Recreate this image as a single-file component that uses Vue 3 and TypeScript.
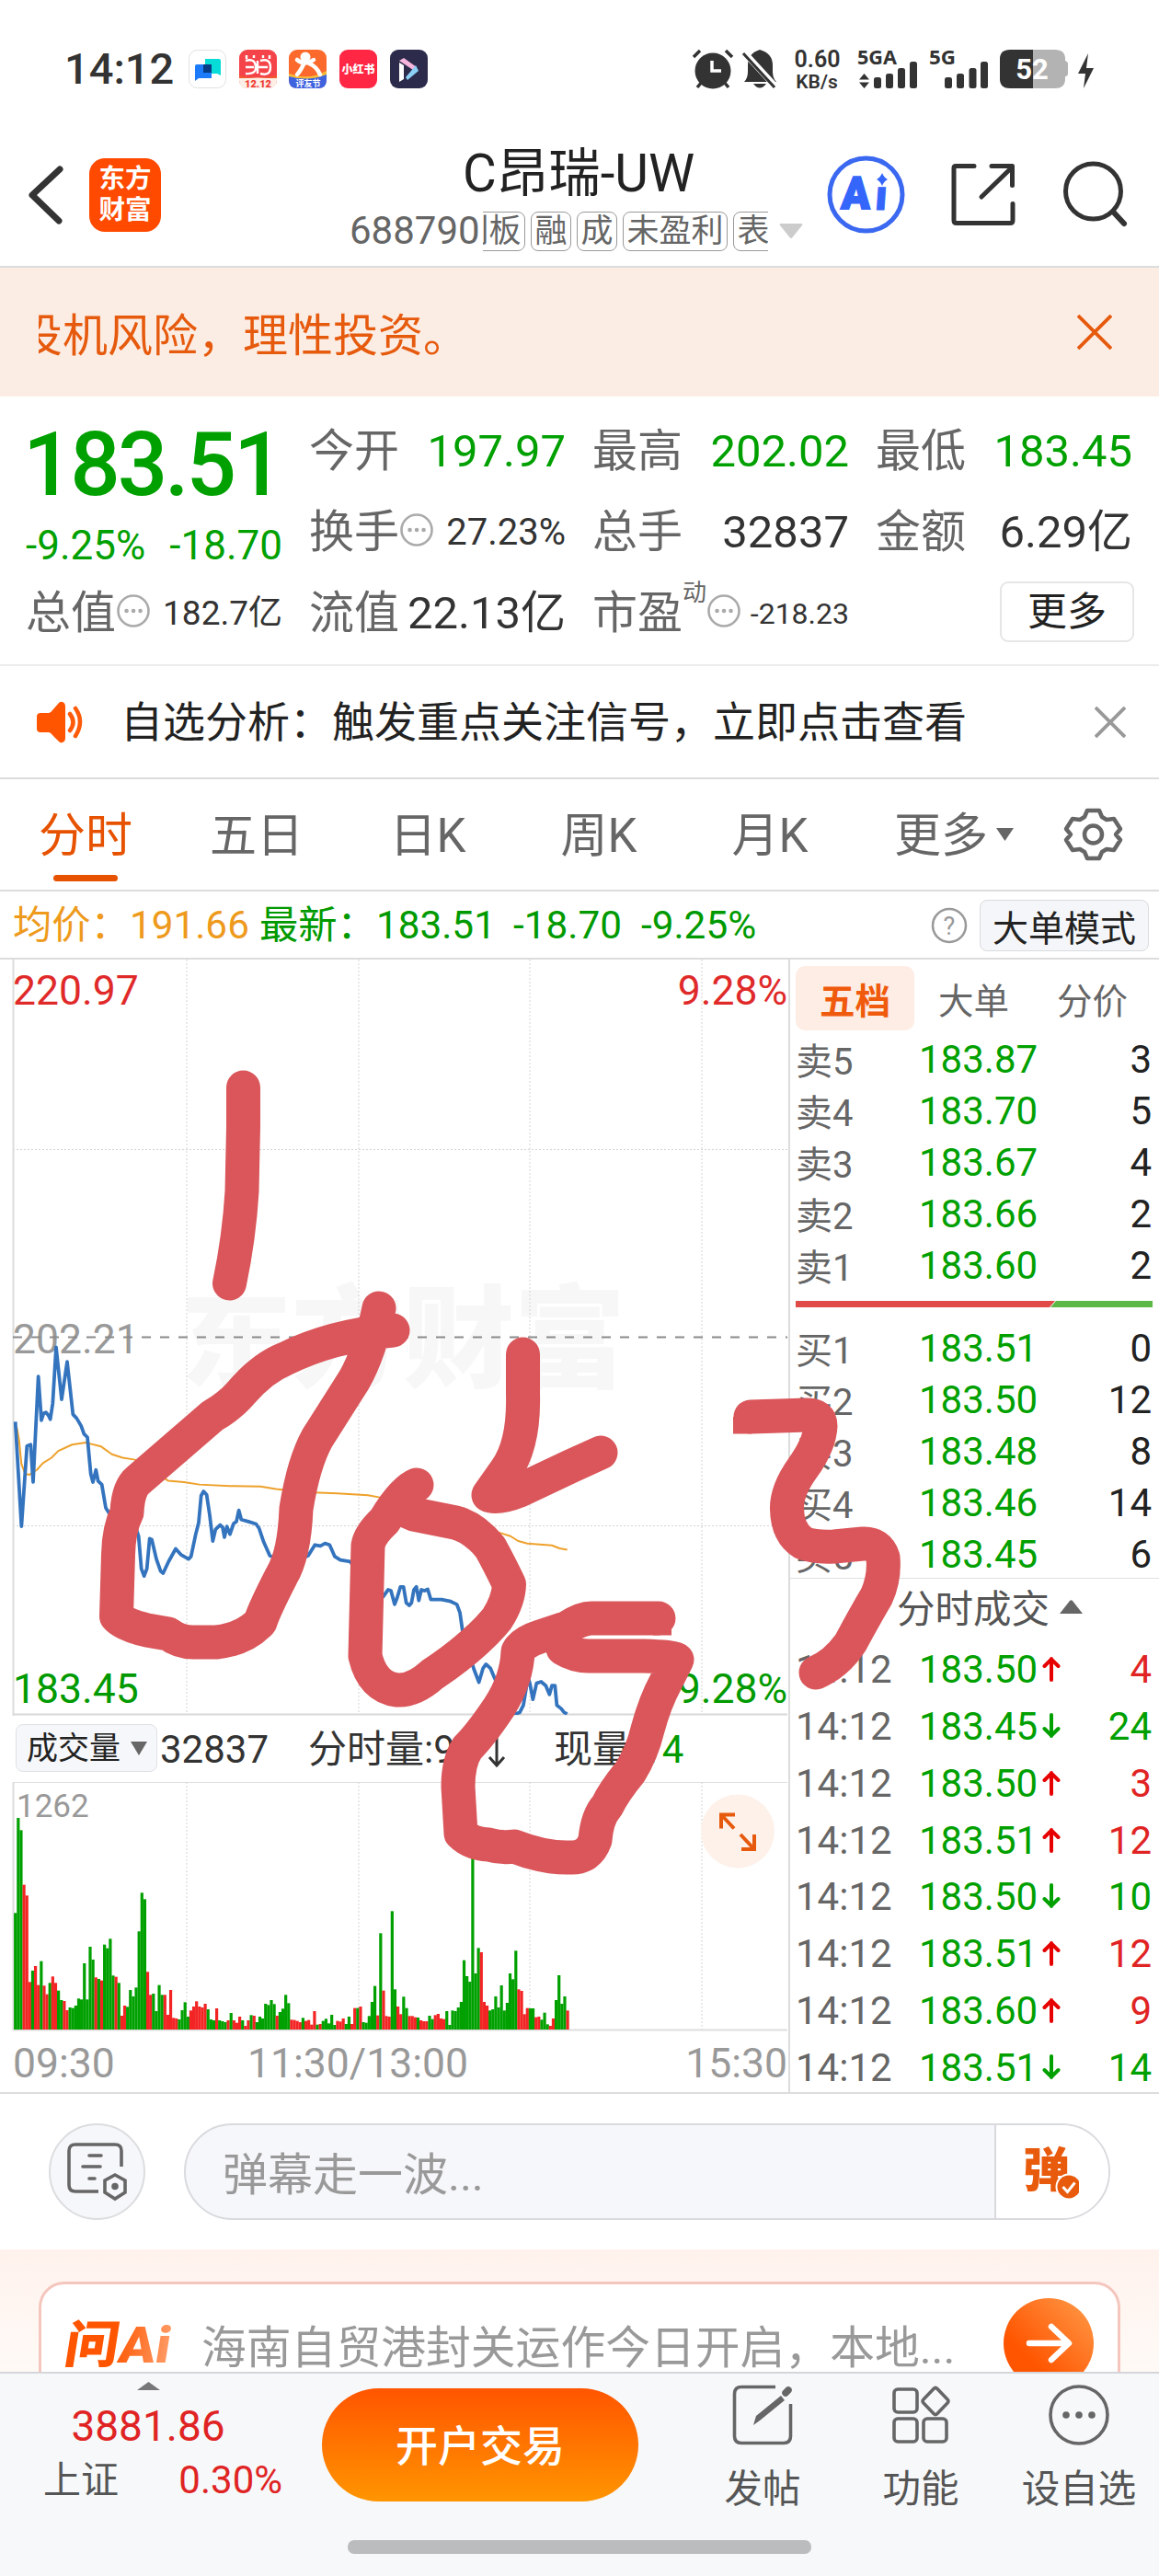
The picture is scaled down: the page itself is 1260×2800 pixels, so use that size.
<script setup lang="ts">
interface Level { label: string; price: string; qty: string }
interface Trade { price: string; up: boolean; qty: string }

const tags: string[] = ['科创板', '融', '成', '未盈利', '表决权']
const tabs: string[] = ['分时', '五日', '日K', '周K', '月K', '更多']

const sells: Level[] = [
  { label: '卖5', price: '183.87', qty: '3' },
  { label: '卖4', price: '183.70', qty: '5' },
  { label: '卖3', price: '183.67', qty: '4' },
  { label: '卖2', price: '183.66', qty: '2' },
  { label: '卖1', price: '183.60', qty: '2' },
]
const buys: Level[] = [
  { label: '买1', price: '183.51', qty: '0' },
  { label: '买2', price: '183.50', qty: '12' },
  { label: '买3', price: '183.48', qty: '8' },
  { label: '买4', price: '183.46', qty: '14' },
  { label: '买5', price: '183.45', qty: '6' },
]
const trades: Trade[] = [
  { price: '183.50', up: true, qty: '4' },
  { price: '183.45', up: false, qty: '24' },
  { price: '183.50', up: true, qty: '3' },
  { price: '183.51', up: true, qty: '12' },
  { price: '183.50', up: false, qty: '10' },
  { price: '183.51', up: true, qty: '12' },
  { price: '183.60', up: true, qty: '9' },
  { price: '183.51', up: false, qty: '14' },
]

const gridX: number[] = [203, 390, 576, 763]

const priceLine =
  '50,953 70,1168 88,1003 100,1000 108,1077 125,860 135,950 142,936 150,934 158,940 164,948 172,915 183,800 201,907 219,830 238,938 250,946 265,962 274,978 285,985 296,1060 303,1077 313,1052 320,1075 332,1082 345,1130 355,1140 400,1150 440,1165 452,1188 461,1255 470,1270 479,1255 488,1193 495,1195 510,1235 524,1260 532,1264 550,1240 573,1214 590,1226 615,1235 623,1230 638,1185 648,1160 656,1105 664,1096 674,1103 684,1145 694,1198 703,1174 718,1165 726,1170 732,1190 740,1168 750,1184 762,1162 771,1158 779,1135 787,1154 810,1158 835,1163 845,1172 860,1200 880,1228 930,1240 990,1233 1005,1228 1027,1206 1045,1208 1060,1203 1075,1206 1092,1230 1110,1237 1142,1240 1200,1290 1250,1312 1266,1298 1275,1300 1287,1328 1295,1315 1306,1292 1316,1292 1325,1325 1335,1330 1342,1325 1350,1298 1358,1292 1366,1320 1374,1298 1385,1300 1395,1297 1405,1318 1440,1318 1470,1322 1490,1328 1500,1345 1508,1380 1545,1460 1562,1488 1575,1460 1585,1451 1600,1460 1612,1478 1650,1530 1680,1553 1695,1550 1707,1535 1722,1478 1728,1490 1738,1523 1750,1490 1765,1487 1780,1495 1792,1513 1800,1495 1810,1495 1816,1535 1830,1542 1840,1550 1850,1553'
const averageLine =
  '55,965 62,990 70,1040 82,1060 95,1062 120,1052 140,1038 168,1027 190,1013 235,1000 280,996 330,1004 365,1020 400,1027 440,1031 500,1055 548,1074 600,1077 650,1082 750,1085 850,1086 900,1091 1000,1098 1100,1100 1200,1104 1235,1108 1250,1112 1400,1140 1640,1183 1665,1188 1690,1198 1720,1203 1800,1207 1825,1213 1850,1216'

// One entry per minute: bar height, r = rising, g = falling.
const volumeData =
  '380g 690g 650g 472r 437r 155r 192g 207r 145r 223g 143r 115r 152g 173r 152r 127g 96g 93r 63r 72g 70g 78g 101g 98g 216g 98g 270g 228g 170r 165g 160r 277g 265g 296g 176g 172r 152g 45r 78r 74g 129g 108g 137g 320g 446g 425g 188r 113r 117g 60g 145g 113g 113r 48r 129r 38r 36r 33g 63g 89g 42g 62r 75r 92r 75r 72r 84r 66g 33g 30g 69r 30g 27g 24g 30r 54g 30r 22r 42r 30g 12r 30r 47g 45r 24g 42g 36g 84g 80g 96g 83g 45r 57g 68g 113g 86g 32r 31r 28r 24r 38g 28r 31r 16r 60r 16g 18r 28g 35g 20g 48g 15g 28r 26r 36r 18g 42g 18r 70r 70g 75r 24g 22g 44g 90g 142g 46r 314g 127r 44r 42r 386g 131g 75r 50r 107g 70g 44r 44r 40r 39g 30r 27r 27r 45g 34g 47r 51r 36r 34r 60g 15g 62g 60g 72g 90g 226g 174g 156g 600g 183g 266g 252r 90r 78r 62g 66g 108g 72g 144g 62g 87g 183g 164g 257g 131r 126r 50r 70r 69g 69g 40r 42r 32g 55g 17g 12r 36r 96g 177g 84g 108g 62r'
const bars = volumeData.split(' ').map((item, i) => {
  const h = parseInt(item) / 3
  return { x: 15.1 + i * 3.127, y: 269 - h, h, fill: item.endsWith('r') ? '#f22424' : '#00a000' }
})
</script>

<template>
  <div class="page">
    <header class="status">
      <span class="clock">14:12</span>
      <svg class="apps" width="262" height="44" viewBox="204 53 262 44">
        <rect x="205.5" y="54.5" width="40" height="41" rx="9" fill="#fff" stroke="#e2e2e2" />
        <path d="M223 64h15q2 0 2 2v16l-4-2h-13z" fill="#08dcd8" />
        <path d="M214 70h16v15h-14l-4 3V72q0-2 2-2z" fill="#1b7bfa" />
        <rect x="221" y="70" width="9" height="9" fill="#063c85" />
        <rect x="260" y="54" width="41" height="42" rx="9" fill="#f5434a" />
        <path d="M260 84h41v3q0 9-9 9h-23q-9 0-9-9z" fill="#fdeee6" />
        <path d="M260 82q20 5 41 0v3h-41z" fill="#f15a2e" />
        <g fill="none" stroke="#fff" stroke-width="2.4">
          <path d="M267 66q10-3 11 6t-11 8M267 73h9M283 66q11-3 11 7t-11 7M281 73h10M280 66v14M268 60v4M276 60v3M286 60v3M293 60v4" />
        </g>
        <text x="280.5" y="95" font-size="11" font-weight="900" text-anchor="middle" fill="#ef3b31">12.12</text>
        <rect x="314" y="54" width="41" height="42" rx="9" fill="#fb6a2c" />
        <path d="M314 82q20 5 41-2v7q0 9-9 9h-23q-9 0-9-9z" fill="#3f62df" />
        <path d="M314 80q22 8 41-3v4q-20 8-41 2z" fill="#f7bd37" />
        <circle cx="332" cy="62" r="5.5" fill="#fff" />
        <path d="M323 65q8 7 18 0M330 70q-4 8-7 11M336 69q8 3 12 12" fill="none" stroke="#fff" stroke-width="4.5" stroke-linecap="round" />
        <text x="335" y="94" font-size="9" font-weight="700" text-anchor="middle" fill="#fff">评友节</text>
        <rect x="369" y="54" width="41" height="42" rx="9" fill="#ff2744" />
        <text x="389.5" y="80" font-size="12" font-weight="900" text-anchor="middle" fill="#fff">小红书</text>
        <rect x="424" y="54" width="41" height="42" rx="9" fill="#2c2b4b" />
        <path d="M434 66l5-3 14 10-4 3z" fill="#f7b5dc" />
        <path d="M434 68l5 3v15l-5 3z" fill="#fff" />
        <path d="M441 84l11-13 3 6-12 10z" fill="#8cd0f5" />
      </svg>
      <svg class="indicators" width="440" height="50" viewBox="752 48 440 50">
        <g fill="#333">
          <circle cx="775" cy="77" r="19.5" />
          <path d="M754 62l7-7M796 62l-7-7M758 95l5-6M792 95l-5-6" stroke="#333" stroke-width="3.5" />
          <path d="M774 66v11h10" fill="none" stroke="#fff" stroke-width="3.5" />
          <path d="M809 89q4-4 4-11v-7q0-13 13-17 14 4 14 17v7q0 7 4 11zM819 91h14q-7 9-14 0z" />
          <path d="M809 57l34 37" stroke="#fff" stroke-width="7" />
          <path d="M808 58l34 37" stroke="#333" stroke-width="3" />
        </g>
        <g font-weight="600" fill="#333" text-anchor="middle">
          <text x="888.5" y="72.5" font-size="25">0.60</text>
          <text x="888" y="95.5" font-size="21">KB/s</text>
        </g>
        <g font-family="'Noto Sans'" font-weight="700" font-size="20.5" fill="#333">
          <text x="932" y="70" textLength="43" lengthAdjust="spacingAndGlyphs">5GA</text>
          <text x="1010" y="70" textLength="29" lengthAdjust="spacingAndGlyphs">5G</text>
        </g>
        <path d="M939.5 80l5.5 6.5h-11zM939.5 96l-5.5-6.500h11z" fill="#333" />
        <g fill="#333">
          <rect x="950" y="84" width="8" height="12" rx="2.500" /><rect x="963" y="80" width="8" height="16" rx="2.500" />
          <rect x="976" y="74" width="8" height="22" rx="2.500" /><rect x="989" y="67" width="8" height="29" rx="2.500" />
          <rect x="1027" y="84" width="8" height="12" rx="2.500" /><rect x="1040" y="80" width="8" height="16" rx="2.500" />
          <rect x="1053.500" y="74" width="8" height="22" rx="2.500" /><rect x="1066" y="67" width="8" height="29" rx="2.500" />
        </g>
        <path d="M1123 54h24q11 0 11 10v2q3 1 3 3v11q0 3-3 3v3q0 10-11 10h-24z" fill="#b3b3b3" />
        <path d="M1123 54h-25q-11 0-11 10v22q0 10 11 10h25z" fill="#333" />
        <text x="1122" y="86" font-size="31" font-weight="700" fill="#fff" text-anchor="middle">52</text>
        <path d="M1183 58l-11 22h8l-2 16 11-22h-8z" fill="#333" />
      </svg>
    </header>

    <nav class="header">
      <svg class="back" width="50" height="80" viewBox="25 172 50 80"><path d="M65 184L35 212l29 28" fill="none" stroke="#333" stroke-width="7" stroke-linecap="round" stroke-linejoin="round" /></svg>
      <div class="brand"><span>东方</span><span>财富</span></div>
      <div class="title">
        <div class="name">C昂瑞-UW</div>
        <div class="code">
          <span>688790</span>
          <div class="tags"><div class="track"><span v-for="t in tags" :key="t" class="tag">{{ t }}</span></div></div>
          <svg width="26" height="18" viewBox="0 0 26 18"><path d="M2 1h22q2 0 1 2L14.500 16q-1.500 2-3 0L1 3Q0 1 2 1z" fill="#ccc" /></svg>
        </div>
      </div>
      <svg class="actions" width="336" height="90" viewBox="896 167 336 90">
        <circle cx="941.500" cy="211.500" r="39.500" fill="none" stroke="#3b68f0" stroke-width="5" />
        <g fill="#3566fb" font-weight="900">
          <text x="0" y="0" font-size="49" transform="translate(914 227) skewX(-3) scale(.94 1)" stroke="#3566fb" stroke-width="2">A</text>
          <text x="0" y="0" font-size="46" transform="translate(950.500 228) skewX(-4)" stroke="#3566fb" stroke-width="1">ı</text>
          <path d="M959 188q2 5 6 7-4 2-6 7-2-5-6-7 4-2 6-7z" />
        </g>
        <g fill="none" stroke="#333" stroke-width="5" stroke-linecap="round" stroke-linejoin="round">
          <path d="M1059 180.500h-20q-2 0-2 2v57q0 3 3 3h58q3 0 3-3v-18M1078 180.500h22.500v21M1100 182l-33 32" />
          <circle cx="1188.500" cy="208" r="30" /><path d="M1210 230l12 13" stroke-width="6" />
        </g>
      </svg>
    </nav>

    <div class="notice">
      <div class="notice-clip"><span>投机风险，理性投资。</span></div>
      <svg width="38" height="38" viewBox="0 0 38 38"><path d="M1 1l36 36M37 1L1 37" stroke="#e65a0e" stroke-width="3.800" /></svg>
    </div>

    <section class="quote">
      <div class="col first">
        <div class="price">183.51</div>
        <div class="change"><span>-9.25%</span><span>-18.70</span></div>
        <div class="cell"><label>总值</label><svg class="info" viewBox="0 0 36 36"><circle cx="18" cy="18" r="16.500" /><path d="M10.500 18h.1M18 18h.1M25.500 18h.1" /></svg><b class="s37">182.7亿</b></div>
      </div>
      <div class="col">
        <div class="cell"><label>今开</label><b class="green">197.97</b></div>
        <div class="cell"><label>换手</label><svg class="info" viewBox="0 0 36 36"><circle cx="18" cy="18" r="16.500" /><path d="M10.500 18h.1M18 18h.1M25.500 18h.1" /></svg><b class="s40">27.23%</b></div>
        <div class="cell"><label>流值</label><b>22.13亿</b></div>
      </div>
      <div class="col">
        <div class="cell"><label>最高</label><b class="green">202.02</b></div>
        <div class="cell"><label>总手</label><b>32837</b></div>
        <div class="cell"><label>市盈</label><sup>动</sup><svg class="info pe" viewBox="0 0 36 36"><circle cx="18" cy="18" r="16.500" /><path d="M10.500 18h.1M18 18h.1M25.500 18h.1" /></svg><b class="s32">-218.23</b></div>
      </div>
      <div class="col">
        <div class="cell"><label>最低</label><b class="green">183.45</b></div>
        <div class="cell"><label>金额</label><b>6.29亿</b></div>
        <div class="cell end"><button class="more">更多</button></div>
      </div>
    </section>

    <section class="analysis">
      <svg width="54" height="46" viewBox="0 0 54 46">
        <path d="M2 17q0-4 4-4h9q2 0 4-3l7-8q2-2 4-1 3 1 3 5v34q0 4-3 5-2 1-4-1l-7-7q-2-3-4-3H6q-4 0-4-4z" fill="#ff5500" />
        <path d="M38 14q7 9 0 18M44 8q10 14 0 30" fill="none" stroke="#ff5a0a" stroke-width="4.500" stroke-linecap="round" />
      </svg>
      <span>自选分析：触发重点关注信号，立即点击查看</span>
      <svg class="x" width="34" height="34" viewBox="0 0 34 34"><path d="M1 1l32 32M33 1L1 33" stroke="#999" stroke-width="3.800" /></svg>
    </section>

    <div class="tabs">
      <div v-for="(t, i) in tabs" :key="t" class="tab" :class="{ on: i === 0 }">{{ t }}</div>
      <svg class="tabs-extra" width="150" height="80" viewBox="1078 868 150 80">
        <path d="M1083 900h19l-9.500 14z" fill="#666" />
        <g fill="none" stroke="#666" stroke-width="4.500" stroke-linejoin="round">
          <path d="M1182 881h13l3 7 5 3 8-1 7 11-5 6v0l5 6-7 11-8-1-5 3-3 7h-13l-3-7-5-3-8 1-7-11 5-6-5-6 7-11 8 1 5-3z" />
          <circle cx="1188.500" cy="907" r="9.500" />
        </g>
      </svg>
    </div>

    <div class="legend">
      <span class="avg">均价：191.66</span>
      <span class="latest">最新：183.51</span>
      <span class="d1">-18.70</span>
      <span class="d2">-9.25%</span>
      <svg width="40" height="40" viewBox="0 0 40 40"><circle cx="20" cy="20" r="18" fill="none" stroke="#999" stroke-width="2.500" /><text x="20" y="29.500" font-size="27" text-anchor="middle" fill="#999">?</text></svg>
      <button>大单模式</button>
    </div>

    <main class="market">
      <div class="charts">
        <svg class="price-chart" width="857" height="822" viewBox="0 0 857 822">
          <text x="196" y="455" font-size="121" font-weight="900" fill="#f7f7f7">东方财富</text>
          <g stroke="#d4d4d4" stroke-width="1" stroke-dasharray="2 2">
            <path v-for="x in gridX" :key="x" :d="`M${x} 0V820`" />
            <path d="M14 206.500H857M14 615.500H857" />
          </g>
          <path d="M14.500 0V822" stroke="#ddd" stroke-width="2" />
          <path d="M14 820.500H856" stroke="#d8d8d8" stroke-width="2" />
          <g font-size="44.500">
            <text x="14" y="48.500" fill="#e02a2a">220.97</text>
            <text x="856" y="48.500" fill="#e02a2a" text-anchor="end">9.28%</text>
            <text x="14" y="427.500" fill="#999">202.21</text>
            <text x="14" y="808" fill="#009a00">183.45</text>
            <text x="856" y="808" fill="#009a00" text-anchor="end">-9.28%</text>
          </g>
          <path d="M14 410.500H856" stroke="#8a8a8a" stroke-width="2" stroke-dasharray="10 10" />
          <svg x="0" y="0" width="858" height="821" viewBox="0 4 2574 1551" preserveAspectRatio="none">
            <g fill="none" stroke-linejoin="round">
              <polyline :points="averageLine" stroke="#eea12b" stroke-width="2" vector-effect="non-scaling-stroke" />
              <polyline :points="priceLine" stroke="#3474be" stroke-width="3.800" vector-effect="non-scaling-stroke" />
            </g>
          </svg>
        </svg>
        <div class="vol-row">
          <button>成交量<svg width="18" height="15" viewBox="0 0 18 15"><path d="M0 0h18L9 15z" fill="#666" /></svg></button>
          <span class="total">32837</span>
          <span class="minute">分时量:94</span>
          <svg width="20" height="36" viewBox="0 0 20 36"><path d="M10 1v33M2 25l8 9 8-9" fill="none" stroke="#333" stroke-width="3" /></svg>
          <span class="now">现量:<i>14</i></span>
        </div>
        <svg class="volume" width="857" height="271" viewBox="0 0 857 271">
          <path d="M14 .5H856" stroke="#e0e0e0" />
          <path d="M14.500 0V270" stroke="#ddd" stroke-width="2" />
          <path v-for="x in gridX" :key="x" :d="`M${x} 0V269`" stroke="#d4d4d4" stroke-dasharray="2 2" />
          <path d="M14 269.500H856" stroke="#ddd" stroke-width="2" />
          <rect v-for="(b, i) in bars" :key="i" :x="b.x" :y="b.y" width="3.200" :height="b.h" :fill="b.fill" />
          <text x="18" y="38" font-size="35" fill="#999">1262</text>
          <circle cx="802" cy="53.500" r="40" fill="#fef1ea" />
          <path d="M799 35.500h-15v15M785 36.500l13 14M806 73h14V57M819 72l-14-15" fill="none" stroke="#e65a0e" stroke-width="4" />
        </svg>
        <div class="axis"><span>09:30</span><span>11:30/13:00</span><span>15:30</span></div>
      </div>

      <aside class="book">
        <div class="book-tabs"><span class="on">五档</span><span>大单</span><span>分价</span></div>
        <div class="levels sell">
          <div v-for="l in sells" :key="l.label" class="level"><em>{{ l.label }}</em><b>{{ l.price }}</b><i>{{ l.qty }}</i></div>
        </div>
        <svg class="ratio" width="388" height="7" viewBox="0 0 388 7"><path d="M0 0h282l-6 7H0z" fill="#e04a48" /><path d="M283 0h105v7H277z" fill="#5bb845" /></svg>
        <div class="levels buy">
          <div v-for="l in buys" :key="l.label" class="level"><em>{{ l.label }}</em><b>{{ l.price }}</b><i>{{ l.qty }}</i></div>
        </div>
        <div class="trades-head">分时成交<svg width="25" height="16" viewBox="0 0 25 16"><path d="M0 15L11 1q1.500-1.500 3 0l11 14z" fill="#666" /></svg></div>
        <div class="trades">
          <div v-for="(t, i) in trades" :key="i" class="trade">
            <em>14:12</em><b>{{ t.price }}</b>
            <svg width="20" height="28" viewBox="0 0 20 28">
              <path :d="t.up ? 'M10 26V3M2.500 11L10 3.500 17.500 11' : 'M10 2v23M2.500 17L10 24.500 17.500 17'" fill="none" :stroke="t.up ? '#e60000' : '#00a000'" stroke-width="4" stroke-linecap="round" />
            </svg>
            <i :class="{ up: t.up }">{{ t.qty }}</i>
          </div>
        </div>
      </aside>
    </main>

    <section class="danmu">
      <div class="round">
        <svg width="68" height="72" viewBox="0 0 68 72" fill="none" stroke="#666" stroke-width="3.600" stroke-linecap="round">
          <path d="M60 30V13q0-7-7-7H10q-7 0-7 7v37q0 7 7 7h25" stroke-linecap="butt" />
          <path d="M25 18h13M18 30h19M25 43h6" />
          <path d="M53 39l11 6v13l-11 7-11-7V45z" /><circle cx="53" cy="51.500" r="2" fill="#666" />
        </svg>
      </div>
      <div class="field">
        <span>弹幕走一波...</span>
        <div class="send">
          <svg width="66" height="66" viewBox="0 0 66 66">
            <text x="5" y="49" font-size="51" font-weight="900" fill="#e85a0c">弹</text>
            <circle cx="55" cy="49" r="14.500" fill="#fff" /><circle cx="55" cy="49" r="12.500" fill="#e85a0c" />
            <path d="M48.500 49l5 5.500 8-10" fill="none" stroke="#fff" stroke-width="3" />
          </svg>
        </div>
      </div>
    </section>

    <section class="ask">
      <div class="ask-card">
        <svg class="ask-logo" width="122" height="62" viewBox="66 2516 122 62">
          <defs><linearGradient id="logoFill" x1="0" x2="1"><stop offset=".45" stop-color="#ff5500" /><stop offset="1" stop-color="#ff9c66" /></linearGradient></defs>
          <g transform="translate(72 2568) skewX(-9)">
            <text x="-4" y="0" font-size="55" font-weight="900" fill="url(#logoFill)" textLength="115" lengthAdjust="spacingAndGlyphs">问Ai</text>
          </g>
        </svg>
        <span>海南自贸港封关运作今日开启，本地...</span>
        <svg class="go" width="98" height="98" viewBox="0 0 98 98">
          <defs><linearGradient id="goFill" x1=".9" y1=".1" x2=".3" y2=".7"><stop offset="0" stop-color="#ff9240" /><stop offset="1" stop-color="#ff5500" /></linearGradient></defs>
          <circle cx="49" cy="49" r="49" fill="url(#goFill)" />
          <path d="M28 49h42M52 31l19 18-19 18" fill="none" stroke="#fff" stroke-width="6.500" stroke-linecap="round" stroke-linejoin="round" />
        </svg>
      </div>
    </section>

    <footer class="bar">
      <div class="index">
        <svg width="25" height="9" viewBox="0 0 25 9"><path d="M0 9L12.500 0 25 9z" fill="#777" /></svg>
        <div class="points">3881.86</div>
        <div class="pct"><span>上证</span><b>0.30%</b></div>
      </div>
      <button class="open">开户交易</button>
      <div class="tool">
        <svg width="66" height="66" viewBox="0 0 66 66" fill="none" stroke="#666" stroke-width="3.600">
          <path d="M47 2.500H10Q2.500 2.500 2.500 10v46q0 7.500 7.500 7.500h46q7.500 0 7.500-7.500V21" />
          <path d="M23 44l3-10 27-22 4 5-27 22z" fill="#666" stroke="none" /><path d="M58 9l3-3" stroke-width="7.500" stroke-linecap="round" />
        </svg>
        <span>发帖</span>
      </div>
      <div class="tool">
        <svg width="66" height="66" viewBox="0 0 66 66" fill="none" stroke="#666" stroke-width="3.600" stroke-linejoin="round">
          <rect x="4" y="5" width="25" height="25" rx="4" /><rect x="4" y="37" width="25" height="25" rx="4" /><rect x="36" y="37" width="25" height="25" rx="4" />
          <path d="M47 4.500q2-2 4 0L62 16q2 2 0 4L51 31.500q-2 2-4 0L36 20q-2-2 0-4z" />
        </svg>
        <span>功能</span>
      </div>
      <div class="tool last">
        <svg width="66" height="66" viewBox="0 0 66 66"><circle cx="33" cy="33" r="31" fill="none" stroke="#666" stroke-width="3.600" /><g fill="#666"><circle cx="19" cy="33" r="3.800" /><circle cx="33" cy="33" r="3.800" /><circle cx="47" cy="33" r="3.800" /></g></svg>
        <span>设自选</span>
      </div>
      <div class="home"></div>
    </footer>

    <svg class="ink" width="1260" height="2800" viewBox="0 0 1260 2800" fill="none" stroke="#da565a" stroke-width="37" stroke-linecap="round" stroke-linejoin="round">
      <path d="M264.500 1182V1225L263 1295Q260 1345 249.500 1395" />
      <path d="M427 1446Q360 1452 310 1477Q285 1487 262 1514Q250 1528 231 1539L150 1609Q139 1618 138 1644Q129 1662 128.500 1690L126.500 1757Q134 1766 160 1772L183 1776Q195 1785 210 1785H235Q265 1782 283 1763Q287 1750 306 1713Q320 1690 322 1640Q330 1590 345 1563L385 1500Q402 1470 412 1422" />
      <path d="M453 1614Q438 1620 418 1653Q402 1668 400 1680L397 1800Q405 1834 432 1837Q450 1838 470 1820Q515 1790 540 1760Q553 1740 553.500 1722Q543 1700 533 1682Q515 1660 495 1655L450 1646L436 1640" />
      <path d="M568.500 1472V1515Q570 1570 550 1598L531 1625Q540 1630 565 1620L620 1594L653 1579" />
      <path d="M716 1759H643Q632 1759 617 1769L587 1779Q568 1785 563 1795Q562 1825 543 1855Q523 1885 508 1900Q498 1915 498 1942L501 1993Q512 2004 531 2005Q545 2009 559 2007Q592 2020 620 2019Q640 2020 647 2000Q649 1975 660 1963Q667 1948 685 1926Q698 1905 704 1880Q712 1850 724 1828L736 1804Q733 1801 700 1800H640Q625 1800 612 1792" />
      <path d="M816 1540L878 1538Q892 1538 892 1550Q891 1570 873 1595Q855 1620 855.500 1640Q856 1666 873 1677Q885 1682 907 1681L938 1678Q955 1677 960 1693Q962 1715 953 1735Q940 1757 925 1785Q910 1808 887 1818" />
      <path d="M716 1759h14v18.500h-20zM797 1540h20v18.500h-20z" fill="#da565a" stroke="none" />
    </svg>
  </div>
</template>

<style>
body { background: #fff; }
</style>

<style scoped>
.page { position: relative; width: 1260px; height: 2800px; overflow: hidden; background: #fff; color: #333; font-family: Roboto, "Noto Sans CJK SC", sans-serif; font-size: 42px; line-height: 1.200; }
.page * { box-sizing: border-box; }
svg { display: block; flex: none; }
span, b, i, em, label { white-space: nowrap; font-style: normal; font-weight: 400; }
button { font-family: inherit; margin: 0; padding: 0; }
.status { display: flex; height: 110px; }
.clock { width: 134px; margin-left: 70px; line-height: 150px; font-size: 47px; font-weight: 500; }
.apps { margin-top: 53px; }
.indicators { margin: 48px 0 0 286px; }

.header { display: flex; height: 181px; border-bottom: 2px solid #dcdcdc; }
.back { margin: 62px 0 0 25px; }
.brand { display: flex; flex-direction: column; align-items: center; width: 78px; height: 80px; margin: 62px 0 0 22px; padding-top: 6px; border-radius: 17px; background: #ff4a00; color: #fff; font-size: 28.500px; line-height: 34px; }
.brand span { font-weight: 700; }
.title { width: 496px; margin-left: 206px; }
.name { height: 112px; line-height: 158px; text-align: center; font-size: 56.500px; color: #222; }
.code { display: flex; height: 56px; line-height: 56px; margin-top: 1px; color: #666; }
.code > span { width: 144px; margin-left: -1px; }
.tags { width: 310px; height: 44px; margin: 7px 0 0 1px; overflow: hidden; }
.track { display: flex; gap: 6px; margin-left: -68px; }
.tag { height: 43px; padding: 0 3.500px; border: 1px solid #999; border-radius: 8px; font-size: 35px; line-height: 42px; }
.code svg { margin: 19px 0 0 12px; }
.actions { margin: 57px 0 0 19px; }

.notice { display: flex; align-items: center; height: 140px; background: #fcede4; color: #e65a0e; }
.notice-clip { width: 1129px; margin-left: 42px; overflow: hidden; font-size: 49px; line-height: 70px; padding-top: 10px; }
.notice-clip span { margin-left: -23px; }

.quote { display: flex; gap: 29px; height: 293px; padding: 16px 29px 0 28px; border-bottom: 2px solid #ececec; }
.col { width: 279px; }
.price { height: 116px; line-height: 116px; font-size: 96px; font-weight: 500; color: #00a000; letter-spacing: -3.200px; margin-left: -3px; }
.change { display: flex; justify-content: space-between; height: 60px; line-height: 61px; font-size: 44px; color: #00a000; }
.cell { display: flex; align-items: center; height: 88px; line-height: 88px; }
.cell label { color: #666; font-size: 49px; }
.cell b { margin-left: auto; font-size: 49px; }
.cell .green { color: #00a000; }
.cell .s40 { font-size: 40px; }
.cell .s37 { font-size: 37px; }
.cell .s32 { font-size: 32px; }
.cell sup { align-self: flex-start; font-size: 26px; line-height: 42px; color: #666; vertical-align: baseline; }
.info { width: 36px; height: 36px; margin-left: 1px; margin-top: -7px; fill: none; stroke: #aaa; stroke-width: 2.600px; stroke-linecap: round; }
.info path { stroke-width: 4.500px; }
.end { justify-content: flex-end; }
.more { width: 146px; height: 66px; margin: -4px -2px 0 0; border: 2px solid #e6e6e6; border-radius: 9px; background: #fff; color: #222; font-size: 43px; line-height: 60px; }

.analysis { display: flex; align-items: center; height: 123px; padding: 0 36px 0 38px; border-bottom: 2px solid #dcdcdc; font-size: 46px; color: #222; }
.analysis span { margin: 2px 0 0 39px; }
.analysis .x { margin-left: auto; }

.tabs { display: flex; height: 122px; border-bottom: 2px solid #dcdcdc; }
.tab { display: flex; flex-direction: column; align-items: center; width: 186px; padding-top: 2px; line-height: 120px; font-size: 51px; color: #666; flex: none; }
.on { color: #e65200; }
.tab.on::after { content: ""; width: 70px; height: 7px; margin-top: -18px; border-radius: 4px; background: #e65200; }
.tabs-extra { margin: 21px 0 0 -38px; }

.legend { display: flex; height: 74px; line-height: 73px; border-bottom: 2px solid #dcdcdc; padding-left: 14px; color: #009a00; font-size: 42.300px; }
.legend .avg { width: 268px; color: #ee9a1c; }
.legend .latest { width: 276px; }
.legend .d1 { width: 139px; }
.legend .d2 { width: 315px; }
.legend > svg { margin-top: 17px; }
.legend button { width: 184px; height: 56px; margin: 9px 0 0 13px; border: 1px solid #dadbde; border-radius: 8px; background: #f5f6f9; font-size: 39px; line-height: 54px; padding-top: 4px; color: #222; }

.market { display: flex; height: 1233px; border-bottom: 2px solid #dcdcdc; }
.charts { width: 857px; }
.vol-row { display: flex; height: 72px; line-height: 74px; }
.vol-row button { display: flex; align-items: center; width: 154px; height: 52px; margin: 9px 0 0 17px; padding-left: 11px; border: 1px solid #e0e1e4; border-radius: 8px; background: #f6f7fa; font-size: 34px; line-height: 50px; color: #222; }
.vol-row button svg { margin-left: 11px; }
.total { width: 161px; margin-left: 3px; }
.vol-row > svg { margin: 20px 0 0 9px; }
.minute { width: 186px; }
.now { margin-left: 52px; }
.now i { color: #009a00; }
.axis { display: flex; justify-content: space-between; height: 68px; padding: 0 1px 0 14px; line-height: 70px; font-size: 44.500px; color: #999; }
.axis span:nth-child(2) { margin-right: 92px; }

.book { width: 403px; height: 1232px; border-left: 2px solid #dcdcdc; padding-left: 6px; overflow: hidden; }
.book-tabs { display: flex; margin-top: 7px; height: 70px; line-height: 77px; font-size: 38.500px; color: #666; }
.book-tabs span { width: 129px; text-align: center; }
.book-tabs .on { border-radius: 10px; background: #fdede4; color: #f05a0c; font-weight: 700; }
.levels { height: 280px; }
.sell { margin-top: 3px; }
.level { display: flex; height: 56px; line-height: 57px; }
.level em { width: 134px; padding: 3px 0 0; font-size: 40px; color: #666; }
.level b { width: 130px; color: #00a000; }
.level i { width: 123px; text-align: right; color: #222; }
.ratio { margin-top: 11px; }
.buy { height: 278px; margin-top: 16px; }
.trades-head { display: flex; align-items: center; height: 69px; margin-left: -6px; padding-left: 116px; border-top: 1px solid #e0e0e0; color: #555; font-size: 41.500px; }
.trades-head svg { margin: -6px 0 0 11px; }
.trade { display: flex; height: 61.850px; line-height: 61.850px; }
.trade em { width: 134px; color: #666; }
.trade b { width: 134px; color: #00a000; }
.trade svg { margin: 16px 0 0; }
.trade i { width: 99px; text-align: right; color: #00a000; }
.trade i.up { color: #e02424; }

.danmu { display: flex; height: 169px; padding: 32px 53px 0; }
.round { display: flex; align-items: center; justify-content: center; width: 105px; height: 105px; border: 2px solid #dcdddf; border-radius: 50%; background: #f6f7fa; }
.field { display: flex; align-items: center; justify-content: space-between; width: 1007px; height: 105px; margin-left: 42px; border: 2px solid #d8dadd; border-radius: 53px; background: #f6f7fa; overflow: hidden; font-size: 49px; color: #999; }
.field > span { margin: 9px 0 0 40px; }
.send { display: flex; align-items: center; width: 124px; height: 105px; border-left: 2px solid #d8dadd; background: #fff; padding-left: 24px; }

.ask { height: 133px; padding: 35px 42px 0; background: linear-gradient(#fff2ed, #fffaf6); overflow: hidden; }
.ask-card { display: flex; height: 134px; border: 3px solid #f5c6bd; border-radius: 28px; background: #fff; font-size: 48.800px; line-height: 139px; color: #999; }
.ask-logo { margin: 33px 0 0 21px; }
.ask-card span { margin-left: 31px; width: 838px; }
.go { margin: 15px 0 0 34px; }

.bar { display: flex; flex-wrap: wrap; height: 222px; background: #f6f8fa; border-top: 2px solid #d4d6d9; align-content: flex-start; }
.index { display: flex; flex-direction: column; align-items: center; width: 322px; height: 150px; padding-top: 9px; }
.points { height: 58px; line-height: 58px; margin-top: 10px; font-size: 46px; color: #e02424; }
.pct { display: flex; justify-content: space-between; width: 260px; height: 56px; line-height: 60px; margin-left: 32px; color: #555; font-size: 41px; }
.pct b { color: #e02424; font-size: 42px; }
.open { width: 344px; height: 123px; margin: 16px 0 0 28px; padding-top: 4px; border: 0; border-radius: 62px; background: linear-gradient(#ff5500, #ff9500); color: #fff; font-size: 46px; font-weight: 500; line-height: 119px; }
.tool { display: flex; flex-direction: column; align-items: center; width: 172px; height: 150px; padding-top: 12px; font-size: 41.500px; line-height: 60px; color: #555; }
.tool:nth-child(3) { margin-left: 49px; }
.tool span { margin-top: 18px; }
.home { width: 504px; height: 15px; margin: 31px 0 0 378px; border-radius: 7px; background: #bbbcbe; }
.ink { position: absolute; left: 0; top: 0; pointer-events: none; }
</style>
